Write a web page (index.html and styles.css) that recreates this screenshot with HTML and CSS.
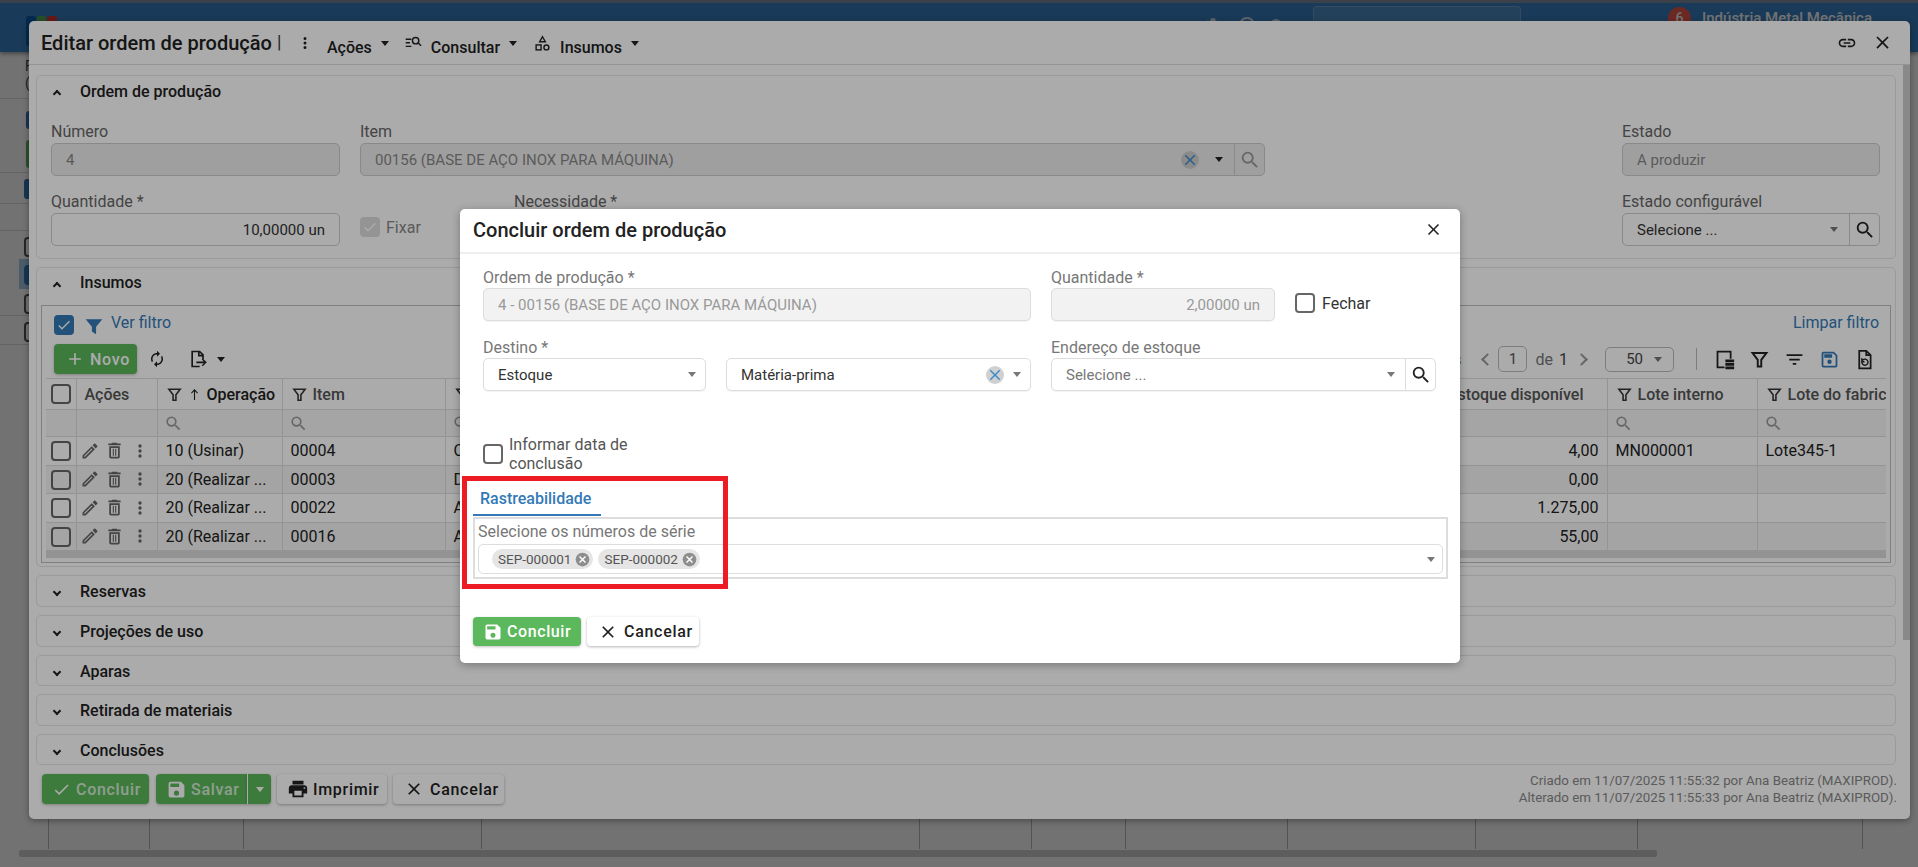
FILE: index.html
```html
<!DOCTYPE html>
<html lang="pt-BR">
<head>
<meta charset="utf-8">
<title>Editar ordem de produção</title>
<link rel="stylesheet" href="styles.css">
</head>
<body>
<svg class="defs" aria-hidden="true">
  <symbol id="i-save" viewBox="0 0 24 24"><path fill="currentColor" d="M17 3H5a2 2 0 0 0-2 2v14a2 2 0 0 0 2 2h14a2 2 0 0 0 2-2V7l-4-4zm-5 16a3 3 0 1 1 0-6 3 3 0 0 1 0 6zm3-10H5V5h10v4z"/></symbol>
  <symbol id="i-close" viewBox="0 0 24 24"><path fill="currentColor" d="M19 6.41 17.59 5 12 10.59 6.41 5 5 6.41 10.59 12 5 17.59 6.41 19 12 13.41 17.59 19 19 17.59 13.41 12z"/></symbol>
  <symbol id="i-search" viewBox="0 0 24 24"><path fill="currentColor" d="M15.5 14h-.79l-.28-.27A6.47 6.47 0 0 0 16 9.5 6.5 6.5 0 1 0 9.5 16c1.61 0 3.09-.59 4.23-1.57l.27.28v.79l5 4.99L20.49 19l-4.99-5zm-6 0C7.01 14 5 11.99 5 9.5S7.01 5 9.5 5 14 7.01 14 9.5 11.99 14 9.5 14z"/></symbol>
  <symbol id="i-more" viewBox="0 0 24 24"><path fill="currentColor" d="M12 8a2 2 0 1 0 0-4 2 2 0 0 0 0 4zm0 2a2 2 0 1 0 0 4 2 2 0 0 0 0-4zm0 6a2 2 0 1 0 0 4 2 2 0 0 0 0-4z"/></symbol>
  <symbol id="i-link" viewBox="0 0 24 24"><path fill="currentColor" d="M3.9 12c0-1.71 1.39-3.1 3.1-3.1h4V7H7c-2.76 0-5 2.24-5 5s2.24 5 5 5h4v-1.9H7c-1.71 0-3.1-1.39-3.1-3.1zM8 13h8v-2H8v2zm9-6h-4v1.9h4c1.71 0 3.1 1.39 3.1 3.1s-1.39 3.1-3.1 3.1h-4V17h4c2.76 0 5-2.24 5-5s-2.24-5-5-5z"/></symbol>
  <symbol id="i-check" viewBox="0 0 24 24"><path fill="currentColor" d="M9 16.17 4.83 12l-1.42 1.41L9 19 21 7l-1.41-1.41z"/></symbol>
  <symbol id="i-add" viewBox="0 0 24 24"><path fill="currentColor" d="M19 13h-6v6h-2v-6H5v-2h6V5h2v6h6v2z"/></symbol>
  <symbol id="i-print" viewBox="0 0 24 24"><path fill="currentColor" d="M19 8H5c-1.66 0-3 1.34-3 3v6h4v4h12v-4h4v-6c0-1.66-1.34-3-3-3zm-3 11H8v-5h8v5zm3-7c-.55 0-1-.45-1-1s.45-1 1-1 1 .45 1 1-.45 1-1 1zm-1-9H6v4h12V3z"/></symbol>
  <symbol id="i-renew" viewBox="0 0 24 24"><path fill="currentColor" d="M12 6v3l4-4-4-4v3c-4.42 0-8 3.58-8 8 0 1.57.46 3.03 1.24 4.26L6.7 14.8A5.87 5.87 0 0 1 6 12c0-3.31 2.69-6 6-6zm6.76 1.74L17.3 9.2c.44.84.7 1.79.7 2.8 0 3.31-2.69 6-6 6v-3l-4 4 4 4v-3c4.42 0 8-3.58 8-8 0-1.57-.46-3.03-1.24-4.26z"/></symbol>
  <symbol id="i-edit" viewBox="0 0 24 24"><path fill="currentColor" d="M14.06 9.02l.92.92L5.92 19H5v-.92l9.06-9.06M17.66 3c-.25 0-.51.1-.7.29l-1.83 1.83 3.75 3.75 1.83-1.83a.996.996 0 0 0 0-1.41l-2.34-2.34c-.2-.2-.45-.29-.71-.29zm-3.6 3.19L3 17.25V21h3.75L17.81 9.94l-3.75-3.75z"/></symbol>
  <symbol id="i-trash" viewBox="0 0 24 24"><path fill="currentColor" d="M16 9v10H8V9h8m-1.5-6h-5l-1 1H5v2h14V4h-3.5l-1-1zM18 7H6v12c0 1.1.9 2 2 2h8c1.1 0 2-.9 2-2V7zM10 10h1.3v8H10zM12.7 10H14v8h-1.3z"/></symbol>
  <symbol id="i-funnel" viewBox="0 0 24 24"><path fill="none" stroke="currentColor" stroke-width="2.2" d="M4 4.5h16l-6 8v7.5h-4v-7.5z"/></symbol>
  <symbol id="i-funnel-solid" viewBox="0 0 24 24"><path fill="currentColor" d="M2 4h20l-7.5 9v9l-5-3.5V13z"/></symbol>
  <symbol id="i-up" viewBox="0 0 24 24"><path fill="currentColor" d="M13 22h-2V6L7 10 5.600 8.600 12 2l6.400 6.600L17 10l-4-4z"/></symbol>
  <symbol id="i-sort" viewBox="0 0 24 24"><path fill="currentColor" d="M10 18h4v-2h-4v2zM3 6v2h18V6H3zm3 7h12v-2H6v2z"/></symbol>
  <symbol id="i-query" viewBox="0 0 24 24"><path fill="currentColor" d="M1 5h8v2H1zM1 10h6v2H1zM1 15h8v2H1z"/><circle cx="15" cy="8" r="4.500" fill="none" stroke="currentColor" stroke-width="2"/><path fill="currentColor" d="M18 12l1.400-1.400 4 4-1.400 1.400z"/></symbol>
  <symbol id="i-shapes" viewBox="0 0 24 24"><path fill="none" stroke="currentColor" stroke-width="2" d="M12 2.500 16 9.500H8z"/><rect x="3" y="14" width="7" height="7" fill="none" stroke="currentColor" stroke-width="2"/><circle cx="17.500" cy="17.500" r="3.500" fill="none" stroke="currentColor" stroke-width="2"/></symbol>
  <symbol id="i-export" viewBox="0 0 24 24"><path fill="none" stroke="currentColor" stroke-width="2" d="M14 21H5V3h9l4 4v5M13 3v5h5"/><path fill="currentColor" d="M10 15h9l-2.500-2.500 1.200-1.200 4.800 4.700-4.800 4.700-1.200-1.200 2.500-2.500h-9z"/></symbol>
  <symbol id="i-columns" viewBox="0 0 24 24"><path fill="none" stroke="currentColor" stroke-width="2" d="M12 21H4V3h15v8"/><path fill="currentColor" d="M13 12h10v3H13zM13 16h10v3H13zM13 20h10v3H13z"/></symbol>
  <symbol id="i-restore" viewBox="0 0 24 24"><path fill="none" stroke="currentColor" stroke-width="2" d="M14 2H6v20h13V7zM14 2v5h5"/><path fill="none" stroke="currentColor" stroke-width="1.600" d="M9 15a3.500 3.500 0 1 0 1.200-2.600L9 11.500v3h3"/></symbol>
  <symbol id="i-floppy" viewBox="0 0 24 24"><path fill="currentColor" d="M17 3H5a2 2 0 0 0-2 2v14a2 2 0 0 0 2 2h14a2 2 0 0 0 2-2V7l-4-4zm2 16H5V5h11.170L19 7.830V19zm-7-7a2.500 2.500 0 1 0 0 5 2.500 2.500 0 0 0 0-5zM6 6h9v4H6z"/></symbol>
  <symbol id="i-clear" viewBox="0 0 24 24"><circle cx="12" cy="12" r="11" fill="currentColor"/><path fill="#fff" d="M17.500 8 16 6.500l-4 4-4-4L6.500 8l4 4-4 4L8 17.500l4-4 4 4 1.500-1.500-4-4z"/></symbol>
  <symbol id="i-clear-blue" viewBox="0 0 24 24"><circle cx="12" cy="12" r="12" fill="#d0d0d0"/><path fill="#3f8ccb" d="M19 6.400 17.600 5 12 10.600 6.400 5 5 6.400l5.600 5.600L5 17.600 6.400 19l5.600-5.600 5.600 5.600 1.400-1.400-5.600-5.600z"/></symbol>
  <symbol id="i-gear" viewBox="0 0 24 24"><path fill="currentColor" d="M19.400 13a7.500 7.500 0 0 0 0-2l2.100-1.600-2-3.500-2.500 1a7.500 7.500 0 0 0-1.700-1L15 3H9l-.4 2.900a7.500 7.500 0 0 0-1.700 1l-2.500-1-2 3.500L4.600 11a7.500 7.500 0 0 0 0 2l-2.100 1.600 2 3.500 2.500-1a7.500 7.500 0 0 0 1.700 1L9 21h6l.4-2.900a7.500 7.500 0 0 0 1.700-1l2.500 1 2-3.500z"/></symbol>
</svg>

<div class="page">
  <header class="topbar">
    <div class="logo"><span class="logo-a"></span><span class="logo-b"></span><span class="logo-c"></span></div>
    <svg class="top-gear"><use href="#i-gear"/></svg>
    <span class="top-ring"></span>
    <span class="top-ring top-ring-small"></span>
    <div class="top-search"></div>
    <span class="top-badge">6</span>
    <span class="top-company">Indústria Metal Mecânica</span>
  </header>
  <div class="strip">
    <div class="strip-head"><span>F</span><span>(</span></div>
    <div class="strip-row strip-row-buttons"><span class="strip-blue"></span><span class="strip-green"></span></div>
    <div class="strip-row strip-row-tab"><span class="strip-blue strip-blue-wide"></span></div>
    <div class="strip-row strip-row-empty"></div>
    <div class="strip-row strip-row-a"><span class="strip-box"></span></div>
    <div class="strip-row strip-row-selected"><span class="strip-box strip-box-on"></span></div>
    <div class="strip-row strip-row-c"><span class="strip-box"></span></div>
    <div class="strip-row strip-row-d"><span class="strip-box"></span></div>
  </div>
  <div class="bg-grid"><i></i><i></i><i></i><i></i><i></i><i></i><i></i><i></i><i></i><i></i><i></i></div>
  <div class="bg-scroll"></div>
</div>

<div class="backdrop"></div>

<section class="window">
  <header class="win-head">
    <h1 class="win-title">Editar ordem de produção</h1>
    <span class="win-sep">|</span>
    <div class="win-menu">
      <svg class="ic-more"><use href="#i-more"/></svg>
      <span class="win-menu-text">Ações</span><span class="caret caret-dark caret-menu"></span>
    </div>
    <div class="win-menu win-menu-b">
      <svg class="ic-menu"><use href="#i-query"/></svg>
      <span class="win-menu-text">Consultar</span><span class="caret caret-dark caret-menu"></span>
    </div>
    <div class="win-menu win-menu-c">
      <svg class="ic-menu"><use href="#i-shapes"/></svg>
      <span class="win-menu-text">Insumos</span><span class="caret caret-dark caret-menu"></span>
    </div>
    <div class="win-tools">
      <svg class="ic-link"><use href="#i-link"/></svg>
      <svg class="ic-x"><use href="#i-close"/></svg>
    </div>
  </header>

  <div class="win-body">
    <div class="win-scroll"></div>

    <section class="panel">
      <h2 class="panel-head"><span class="chev chev-up"></span>Ordem de produção</h2>
      <div class="form">
        <div class="form-row">
          <div class="field w-num"><label class="lbl">Número</label><div class="inp inp-off">4</div></div>
          <div class="field w-item">
            <label class="lbl">Item</label>
            <div class="inp inp-off inp-group">
              <span class="grow">00156 (BASE DE AÇO INOX PARA MÁQUINA)</span>
              <svg class="ic-clear-outer"><use href="#i-clear-blue"/></svg>
              <span class="caret caret-dark caret-item"></span>
              <span class="addon"><svg class="ic-search ic-search-off"><use href="#i-search"/></svg></span>
            </div>
          </div>
          <div class="field w-state"><label class="lbl">Estado</label><div class="inp inp-off">A produzir</div></div>
        </div>
        <div class="form-row">
          <div class="field w-num"><label class="lbl">Quantidade *</label><div class="inp inp-right inp-dark">10,00000 un</div></div>
          <div class="fix"><span class="box box-off"><svg><use href="#i-check"/></svg></span><span class="fix-text">Fixar</span></div>
          <div class="field w-need"><label class="lbl">Necessidade *</label><div class="inp"></div></div>
          <div class="field w-state">
            <label class="lbl">Estado configurável</label>
            <div class="inp inp-group inp-dark">
              <span class="grow">Selecione ...</span>
              <span class="caret caret-item"></span>
              <span class="addon"><svg class="ic-search"><use href="#i-search"/></svg></span>
            </div>
          </div>
        </div>
      </div>
    </section>

    <section class="panel panel-grid">
      <h2 class="panel-head"><span class="chev chev-up"></span>Insumos</h2>
      <div class="grid-box">
        <div class="bar bar-filter">
          <span class="box box-on"><svg><use href="#i-check"/></svg></span>
          <svg class="ic-funnel-solid"><use href="#i-funnel-solid"/></svg>
          <a class="link">Ver filtro</a>
          <a class="link link-right">Limpar filtro</a>
        </div>
        <div class="bar bar-actions">
          <button class="btn btn-green btn-new"><svg><use href="#i-add"/></svg>Novo</button>
          <svg class="ic-renew"><use href="#i-renew"/></svg>
          <svg class="ic-export"><use href="#i-export"/></svg>
          <span class="caret caret-dark caret-export"></span>
          <div class="pager">
            <span class="pager-text">registros</span>
            <span class="pager-arrow pager-prev"></span>
            <span class="pager-box">1</span>
            <span class="pager-text pager-de">de</span>
            <span class="pager-total">1</span>
            <span class="pager-arrow pager-next"></span>
            <span class="pager-size">50<span class="caret"></span></span>
            <span class="pager-div"></span>
            <svg class="ic-tool"><use href="#i-columns"/></svg>
            <svg class="ic-tool"><use href="#i-funnel"/></svg>
            <svg class="ic-tool"><use href="#i-sort"/></svg>
            <svg class="ic-tool ic-tool-blue"><use href="#i-floppy"/></svg>
            <svg class="ic-tool"><use href="#i-restore"/></svg>
          </div>
        </div>
        <table class="tbl">
          <colgroup><col class="c1"><col class="c2"><col class="c3"><col class="c4"><col class="c5"><col class="c6"><col class="c7"><col class="c8"></colgroup>
          <thead>
            <tr class="tr-head">
              <th class="cell-box"><span class="box"></span></th>
              <th class="th-plain">Ações</th>
              <th><span class="th-in"><svg class="ic-f"><use href="#i-funnel"/></svg><svg class="ic-up"><use href="#i-up"/></svg><b>Operação</b></span></th>
              <th><span class="th-in"><svg class="ic-f"><use href="#i-funnel"/></svg>Item</span></th>
              <th><span class="th-in"><svg class="ic-f"><use href="#i-funnel"/></svg>Componente</span></th>
              <th class="th-right">Estoque disponível</th>
              <th><span class="th-in"><svg class="ic-f"><use href="#i-funnel"/></svg>Lote interno</span></th>
              <th><span class="th-in th-clip"><svg class="ic-f"><use href="#i-funnel"/></svg>Lote do fabricante</span></th>
            </tr>
            <tr class="tr-filter">
              <td></td><td></td>
              <td><svg class="ic-s"><use href="#i-search"/></svg></td>
              <td><svg class="ic-s"><use href="#i-search"/></svg></td>
              <td><svg class="ic-s"><use href="#i-search"/></svg></td>
              <td></td>
              <td><svg class="ic-s"><use href="#i-search"/></svg></td>
              <td><svg class="ic-s"><use href="#i-search"/></svg></td>
            </tr>
          </thead>
          <tbody>
            <tr>
              <td class="cell-box"><span class="box"></span></td>
              <td class="cell-act"><svg class="ic-pen"><use href="#i-edit"/></svg><svg class="ic-del"><use href="#i-trash"/></svg><svg class="ic-dots"><use href="#i-more"/></svg></td>
              <td>10 (Usinar)</td><td>00004</td><td>C</td><td class="num">4,00</td><td>MN000001</td><td>Lote345-1</td>
            </tr>
            <tr>
              <td class="cell-box"><span class="box"></span></td>
              <td class="cell-act"><svg class="ic-pen"><use href="#i-edit"/></svg><svg class="ic-del"><use href="#i-trash"/></svg><svg class="ic-dots"><use href="#i-more"/></svg></td>
              <td>20 (Realizar ...</td><td>00003</td><td>D</td><td class="num">0,00</td><td></td><td></td>
            </tr>
            <tr>
              <td class="cell-box"><span class="box"></span></td>
              <td class="cell-act"><svg class="ic-pen"><use href="#i-edit"/></svg><svg class="ic-del"><use href="#i-trash"/></svg><svg class="ic-dots"><use href="#i-more"/></svg></td>
              <td>20 (Realizar ...</td><td>00022</td><td>A</td><td class="num">1.275,00</td><td></td><td></td>
            </tr>
            <tr>
              <td class="cell-box"><span class="box"></span></td>
              <td class="cell-act"><svg class="ic-pen"><use href="#i-edit"/></svg><svg class="ic-del"><use href="#i-trash"/></svg><svg class="ic-dots"><use href="#i-more"/></svg></td>
              <td>20 (Realizar ...</td><td>00016</td><td>A</td><td class="num">55,00</td><td></td><td></td>
            </tr>
          </tbody>
        </table>
        <div class="tbl-scroll"></div>
      </div>
    </section>

    <section class="panel panel-closed"><h2 class="panel-head"><span class="chev"></span>Reservas</h2></section>
    <section class="panel panel-closed"><h2 class="panel-head"><span class="chev"></span>Projeções de uso</h2></section>
    <section class="panel panel-closed"><h2 class="panel-head"><span class="chev"></span>Aparas</h2></section>
    <section class="panel panel-closed"><h2 class="panel-head"><span class="chev"></span>Retirada de materiais</h2></section>
    <section class="panel panel-closed"><h2 class="panel-head"><span class="chev"></span>Conclusões</h2></section>

    <footer class="win-foot">
      <button class="btn btn-green btn-f1"><svg><use href="#i-check"/></svg><span class="faded">Concluir</span></button>
      <div class="split">
        <button class="btn btn-green btn-f2"><svg><use href="#i-save"/></svg><span class="faded">Salvar</span></button>
        <button class="btn btn-green btn-f3"><span class="caret caret-white"></span></button>
      </div>
      <button class="btn btn-white btn-f4"><svg><use href="#i-print"/></svg>Imprimir</button>
      <button class="btn btn-white btn-f5"><svg><use href="#i-close"/></svg>Cancelar</button>
      <div class="audit">
        <div>Criado em 11/07/2025 11:55:32 por Ana Beatriz (MAXIPROD).</div>
        <div>Alterado em 11/07/2025 11:55:33 por Ana Beatriz (MAXIPROD).</div>
      </div>
    </footer>
  </div>
</section>

<div class="backdrop backdrop-top"></div>

<section class="dialog">
  <header class="dlg-head">
    <h2 class="dlg-title">Concluir ordem de produção</h2>
    <svg class="dlg-x"><use href="#i-close"/></svg>
  </header>
  <div class="dlg-form">
    <div class="dlg-row">
      <div class="field d-wide"><label class="lbl lbl-d">Ordem de produção *</label><div class="inp inp-off inp-d">4 - 00156 (BASE DE AÇO INOX PARA MÁQUINA)</div></div>
      <div class="field d-qty"><label class="lbl lbl-d">Quantidade *</label><div class="inp inp-off inp-d inp-right">2,00000 un</div></div>
      <div class="close-check"><span class="box box-d"></span><span class="close-text">Fechar</span></div>
    </div>
    <div class="dlg-row dlg-row-2">
      <div class="field d-dest">
        <label class="lbl lbl-d">Destino *</label>
        <div class="inp inp-d inp-group"><span class="grow txt-dark">Estoque</span><span class="caret caret-sel"></span></div>
      </div>
      <div class="field d-type">
        <label class="lbl lbl-d lbl-hidden">Tipo</label>
        <div class="inp inp-d inp-group"><span class="grow txt-dark">Matéria-prima</span><svg class="ic-clear-inner"><use href="#i-clear-blue"/></svg><span class="caret caret-sel"></span></div>
      </div>
      <div class="field d-addr">
        <label class="lbl lbl-d">Endereço de estoque</label>
        <div class="inp inp-d inp-group"><span class="grow">Selecione ...</span><span class="caret caret-sel caret-addr"></span><span class="addon addon-d"><svg class="ic-search"><use href="#i-search"/></svg></span></div>
      </div>
    </div>
    <div class="inform"><span class="box box-d"></span><span class="inform-text">Informar data de conclusão</span></div>
  </div>
  <div class="tabs"><span class="tab">Rastreabilidade</span></div>
  <div class="tab-body">
    <label class="lbl lbl-d lbl-serial">Selecione os números de série</label>
    <div class="chips">
      <span class="chip">SEP-000001<svg class="chip-x"><use href="#i-clear"/></svg></span>
      <span class="chip">SEP-000002<svg class="chip-x"><use href="#i-clear"/></svg></span>
      <span class="caret caret-sel caret-chips"></span>
    </div>
  </div>
  <footer class="dlg-foot">
    <button class="btn btn-green btn-d1"><svg><use href="#i-save"/></svg>Concluir</button>
    <button class="btn btn-white btn-d2"><svg><use href="#i-close"/></svg>Cancelar</button>
  </footer>
  <div class="highlight"></div>
</section>
</body>
</html>
```

FILE: styles.css
```css
* { box-sizing: border-box; }
html, body { margin: 0; width: 1918px; height: 867px; overflow: hidden; }
body { position: relative; background: #fff; font-family: Roboto, "Liberation Sans", sans-serif; color: #222; font-size: 15px; }
h1, h2 { margin: 0; font-weight: 500; }
svg { display: block; flex: none; }
.defs { position: absolute; width: 0; height: 0; }

/* page behind the windows */
.page { height: 867px; display: flex; flex-direction: column; }
.topbar { height: 52px; flex: none; display: flex; align-items: flex-start; background: #3a82c4; border-top: 3px solid #8592a6; box-shadow: 0 2px 4px rgba(0,0,0,.4); color: #fff; }
.logo { display: flex; gap: 1px; margin: 13px 0 0 26px; width: 31px; }
.logo span { width: 10px; height: 30px; border-radius: 2px; }
.logo-a { background: #0a5fb0; }
.logo-b { background: #55b055; }
.logo-c { background: #e53935; }
.top-gear { width: 18px; height: 18px; margin: 13px 0 0 1147px; color: #cfe0ef; }
.top-ring { width: 16px; height: 16px; border: 2px solid #cfe0ef; border-radius: 50%; margin: 14px 0 0 17px; }
.top-ring-small { width: 12px; height: 12px; margin: 16px 0 0 15px; }
.top-search { width: 208px; height: 40px; margin: 3px 0 0 31px; background: rgba(255,255,255,.12); border: 1px solid rgba(255,255,255,.2); border-radius: 4px; }
.top-badge { width: 23px; height: 23px; margin: 4px 0 0 147px; border-radius: 50%; background: #f25c50; text-align: center; font-size: 14px; font-weight: 500; line-height: 23px; }
.top-company { margin: 6px 0 0 11px; font-size: 15px; font-weight: 500; color: #fff; }

.strip { height: 293px; flex: none; margin-top: 0; display: flex; flex-direction: column; width: 60px; color: #444; }
.strip-head { height: 47px; flex: none; padding: 6px 0 0 25px; display: flex; flex-direction: column; gap: 0; border-bottom: 1px solid #ddd; line-height: 17px; font-size: 14px; }
.strip-row { flex: none; padding-left: 26px; border-bottom: 1px solid #ddd; }
.strip-row-buttons { height: 74px; padding-top: 12px; }
.strip-row-tab { height: 31px; padding: 6px 0 0 24px; }
.strip-row-empty { height: 27px; }
.strip-row-a { height: 28px; padding: 6px 0 0 24px; border: 0; }
.strip-row-selected { height: 30px; padding: 6px 0 0 24px; margin-left: 19px; padding-left: 5px; background: #a9cdea; border: 0; }
.strip-row-c { height: 27px; padding: 5px 0 0 24px; }
.strip-row-d { height: 29px; padding: 6px 0 0 24px; }
.strip-blue { display: block; width: 20px; height: 18px; margin-bottom: 11px; border-radius: 3px; background: #337ab7; }
.strip-blue-wide { height: 20px; }
.strip-green { display: block; width: 20px; height: 28px; border-radius: 3px; background: #5cb85c; }
.strip-box { display: block; width: 20px; height: 20px; border: 2px solid #555; border-radius: 4px; }
.strip-box-on { background: #337ab7; border-color: #337ab7; }
.bg-grid { margin-top: auto; height: 34px; flex: none; display: grid; grid-template-columns: 49px 101px 94px 238px 438px 112px 94px 162px 188px 162px 225px; }
.bg-grid i { border-right: 1px solid #bbb; }
.bg-scroll { height: 7px; flex: none; margin: 1px 0 10px 19px; width: 1638px; border-radius: 2px; background: #cfd0d2; }

.backdrop { position: absolute; inset: 0; background: rgba(0,0,0,.33); }

/* outer window */
.window { position: absolute; left: 29px; top: 21px; width: 1881px; height: 798px; background: #fff; border-radius: 5px; box-shadow: 0 2px 6px rgba(0,0,0,.35); display: flex; flex-direction: column; }
.win-head { height: 44px; flex: none; display: flex; align-items: center; border-bottom: 1px solid #ddd; padding-left: 12px; }
.win-title { font-size: 20px; font-weight: 500; color: #222; line-height: 40px; width: 236px; white-space: nowrap; }
.win-sep { width: 10px; font-size: 18px; color: #333; margin-top: -2px; }
.win-menu { display: flex; align-items: center; margin-left: 17px; margin-top: 2px; }
.win-menu-b { margin-left: 16px; }
.win-menu-c { margin-left: 17px; }
.win-menu-text { font-size: 16px; font-weight: 500; color: #222; margin-top: 7px; }
.ic-more { width: 18px; height: 18px; color: #222; margin-right: 13px; margin-left: -8px; margin-top: -2px; }
.ic-menu { width: 17px; height: 17px; color: #222; margin-right: 9px; margin-top: -1px; }
.caret { display: inline-block; width: 0; height: 0; border-left: 4px solid transparent; border-right: 4px solid transparent; border-top: 5px solid #777; flex: none; }
.caret-dark { border-top-color: #222; }
.caret-menu { margin-left: 9px; margin-top: 0; }
.win-tools { margin-left: auto; display: flex; align-items: center; gap: 15px; padding-right: 17px; }
.ic-link { width: 20px; height: 20px; color: #222; }
.ic-x { width: 21px; height: 21px; color: #222; }

.win-body { flex: 1; position: relative; padding: 10px 14px 0 7px; display: flex; flex-direction: column; min-height: 0; }
.win-scroll { position: absolute; right: 0; top: 0; width: 7px; height: 575px; background: #cdcdcd; }
.panel { border: 1px solid #e6e6e6; border-radius: 5px; flex: none; margin-bottom: 8px; }
.panel-closed { height: 31.6px; }
.panel-grid { height: 300.4px; }
.panel-grid .panel-head { padding-bottom: 2px; }
.panel-head { height: 31px; display: flex; align-items: center; font-size: 16px; font-weight: 500; color: #222; padding-left: 43px; position: relative; }
.chev { position: absolute; left: 17px; top: 13px; width: 6px; height: 6px; border-right: 2px solid #222; border-bottom: 2px solid #222; transform: rotate(45deg); }
.chev-up { top: 15px; transform: rotate(225deg); }

.form { padding: 15px 15px 0 14px; display: flex; flex-direction: column; gap: 16px; height: 151px; }
.form-row { display: flex; }
.field { display: flex; flex-direction: column; flex: none; }
.lbl { height: 21px; font-size: 16px; line-height: 20px; color: #666; white-space: nowrap; }
.inp { height: 33px; border: 1px solid #ccc; border-radius: 5px; display: flex; align-items: center; padding: 0 14px; font-size: 15px; color: #444; background: #fff; white-space: nowrap; }
.inp-off { background: #eee; color: #888; }
.inp-right { justify-content: flex-end; }
.inp-dark { color: #333; }
.inp-group { padding-right: 0; }
.grow { flex: 1; min-width: 0; }
.w-num { width: 289px; margin-right: 20px; }
.w-item { width: 905px; }
.w-state { width: 258px; margin-left: auto; }
.w-need { width: 300px; margin-left: 14px; }
.addon { width: 30px; height: 100%; border-left: 1px solid #ccc; display: flex; align-items: center; justify-content: center; flex: none; }
.ic-search { width: 22px; height: 22px; color: #222; }
.ic-search-off { color: #999; }
.ic-clear-outer { width: 18px; height: 18px; margin-right: 16px; }
.caret-item { margin-right: 11px; }
.fix { width: 140px; display: flex; align-items: center; height: 20px; margin-top: 25px; }
.fix-text { margin-left: 6px; font-size: 16px; color: #888; }
.box { display: inline-block; width: 20px; height: 20px; border: 2px solid #666; border-radius: 4px; flex: none; background: transparent; vertical-align: middle; }
.box svg { width: 16px; height: 16px; color: #fff; }
.box-off { background: #ddd; border-color: #ddd; }
.box-on { background: #337ab7; border-color: #337ab7; }

/* grid panel */
.grid-box { margin: 6px 4px 0; height: 258px; border: 1px solid #bfbfbf; padding: 0 4px; }
.bar { display: flex; align-items: center; padding: 0 0 0 8px; }
.bar-filter { height: 38px; }
.ic-funnel-solid { width: 20px; height: 20px; color: #337ab7; margin: 2px 7px 0 10px; }
.link { color: #337ab7; font-size: 16px; margin-top: -6px; }
.link-right { margin-left: auto; margin-right: 7px; }
.bar-actions { height: 34px; padding-right: 11px; padding-bottom: 4px; }
.btn { font: 500 16px Roboto, sans-serif; border: 0; border-radius: 4px; display: inline-flex; align-items: center; letter-spacing: .7px; padding: 0; flex: none; }
.btn-green { background: #5cb85c; color: #fff; box-shadow: 0 1px 3px rgba(0,0,0,.25); }
.btn-white { background: #fff; color: #222; box-shadow: 0 1px 3px rgba(0,0,0,.3); }
.btn-new { width: 83px; height: 30px; padding-left: 11px; }
.btn-new svg { width: 20px; height: 20px; margin-right: 5px; }
.ic-renew { width: 18px; height: 18px; color: #222; margin-left: 11px; }
.ic-export { width: 20px; height: 20px; color: #222; margin-left: 22px; }
.caret-export { margin-left: 9px; }
.pager { margin-left: auto; display: flex; align-items: center; font-size: 15px; color: #777; }
.pager-text { font-size: 16px; }
.pager-prev, .pager-next { width: 9px; height: 9px; border-left: 2px solid #999; border-bottom: 2px solid #999; transform: rotate(45deg); }
.pager-prev { margin: 0 6px 0 22px; }
.pager-next { margin: 0 19px 0 9px; transform: rotate(225deg); }
.pager-box { width: 29px; height: 26px; border: 1px solid #bbb; border-radius: 5px; text-align: center; line-height: 24px; color: #555; font-size: 15px; }
.pager-de { margin-left: 8px; }
.pager-total { margin-left: 6px; color: #444; font-size: 16px; }
.pager-size { width: 69px; height: 25px; border: 1px solid #bbb; border-radius: 5px; display: flex; align-items: center; justify-content: flex-end; padding-right: 11px; gap: 11px; color: #444; }
.pager-div { width: 1px; height: 22px; background: #bbb; margin: 0 17px 0 22px; }
.ic-tool { width: 21px; height: 21px; color: #222; margin-right: 14px; }
.ic-tool:last-child { margin-right: 0; }
.ic-tool-blue { color: #337ab7; }

.tbl { width: 1840px; table-layout: fixed; border-collapse: collapse; font-size: 16px; color: #222; }
.c1 { width: 30px; } .c2 { width: 81px; } .c3 { width: 125px; } .c4 { width: 163px; }
.c5 { width: 992px; } .c6 { width: 170px; } .c7 { width: 150px; } .c8 { width: 129px; }
.tbl th, .tbl td { padding: 0 0 0 8px; border: 1px solid #ddd; border-left-width: 0; white-space: nowrap; overflow: hidden; text-align: left; }
.tbl tr > :last-child { border-right: 0; }
.tbl th { font-weight: 500; color: #555; padding-left: 11px; }
.tr-head { height: 31px; }
.tr-filter { height: 27px; background: #f7f7f7; }
.tbl tbody tr { height: 28.5px; }
.tbl tbody tr:nth-child(even) { background: #f5f5f5; }
.th-plain { padding-left: 8px !important; }
.th-in { display: flex; align-items: center; }
.th-in b { font-weight: 500; color: #222; }
.tbl th.th-right { text-align: right; padding-right: 32px; }
.tbl .cell-box { padding: 0 0 0 5px; }
.ic-f { width: 17px; height: 17px; color: #333; margin-right: 5px; margin-left: -3px; }
.ic-up { width: 13px; height: 15px; color: #222; margin: 0 6px 0 0; }
.ic-s { width: 19px; height: 19px; color: #999; margin-left: -2px; }
.cell-act { padding: 0 !important; }
.cell-act svg { display: inline-block; vertical-align: middle; }
.ic-pen { width: 20px; height: 20px; color: #666; margin-left: 3px; }
.ic-del { width: 21px; height: 21px; color: #666; margin-left: 4px; }
.ic-dots { width: 20px; height: 20px; color: #666; margin-left: 5px; }
.tbl td.num { text-align: right; padding-right: 8px; }
.tbl-scroll { height: 7px; background: #dcdcdc; width: 1840px; }

/* footer of the outer window */
.win-foot { display: flex; align-items: flex-start; padding: 1px 0 0 6px; height: 36px; margin-top: 0; }
.btn-f1, .btn-f2, .btn-f3, .btn-f4, .btn-f5 { height: 30px; }
.btn svg { color: inherit; }
.btn-f1 { width: 107px; padding-left: 10px; }
.btn-f1 svg { width: 19px; height: 19px; margin-right: 5px; }
.faded { color: rgba(255,255,255,.75); }
.split { display: flex; margin-left: 7px; }
.btn-f2 { width: 91px; padding-left: 10px; border-radius: 4px 0 0 4px; }
.btn-f2 svg { width: 21px; height: 21px; margin-right: 4px; }
.btn-f3 { width: 24px; justify-content: center; border-left: 1px solid #fff; border-radius: 0 4px 4px 0; }
.caret-white { border-top-color: #fff; }
.btn-f4 { width: 110px; margin-left: 6px; padding-left: 10px; }
.btn-f4 svg { width: 22px; height: 22px; margin-right: 4px; }
.btn-f5 { width: 111px; margin-left: 6px; padding-left: 11px; }
.btn-f5 svg { width: 20px; height: 20px; margin-right: 6px; }
.audit { margin-left: auto; margin-right: -1px; margin-top: -2px; text-align: right; font-size: 13.33px; line-height: 17px; color: #888; letter-spacing: 0; }

/* dialog */
.dialog { position: absolute; left: 460px; top: 209px; width: 1000px; height: 454px; background: #fff; border-radius: 5px; box-shadow: 0 2px 8px rgba(0,0,0,.3); display: flex; flex-direction: column; }
.dlg-head { height: 45px; flex: none; display: flex; align-items: center; justify-content: space-between; padding: 0 17px 2px 13px; border-bottom: 2px solid #eee; }
.dlg-title { font-size: 20px; font-weight: 500; color: #222; }
.dlg-x { width: 19px; height: 19px; color: #222; }
.dlg-form { height: 248px; flex: none; padding: 13px 0 0 23px; }
.dlg-row { display: flex; }
.dlg-row-2 { margin-top: 16px; }
.lbl-d { color: #777; line-height: 22px; }
.inp-d { border-color: #ddd; box-shadow: 0 1px 1px rgba(0,0,0,.05); color: #777; }
.inp-d.inp-off { background: #f2f2f2; color: #999; }
.txt-dark { color: #333; }
.d-wide { width: 548px; margin-right: 20px; }
.d-qty { width: 224px; }
.close-check { display: flex; align-items: center; height: 20px; margin: 26px 0 0 20px; }
.close-text { margin-left: 7px; font-size: 16px; color: #333; }
.d-dest { width: 223px; margin-right: 20px; }
.d-type { width: 305px; margin-right: 20px; }
.d-addr { width: 385px; }
.lbl-hidden { visibility: hidden; }
.caret-sel { margin-right: 9px; }
.ic-clear-inner { width: 18px; height: 18px; margin-right: 9px; }
.caret-addr { margin-right: 10px; }
.addon-d { border-left-color: #ddd; }
.inform { display: flex; align-items: center; margin-top: 44px; width: 180px; }
.box-d { border-color: #666; }
.inform-text { margin-left: 6px; font-size: 16px; line-height: 19px; color: #555; }
.tabs { height: 11px; position: relative; flex: none; margin: -3px 0 0 13px; }
.tab { display: block; width: 128px; height: 24px; position: relative; top: -7px; padding-left: 7px; border-bottom: 2px solid #337ab7; font-size: 16px; font-weight: 500; color: #337ab7; line-height: 14px; }
.tab-body { flex: none; height: 62px; margin: 7px 12px 0 13px; border: 2px solid #ddd; padding: 4px 3px 0 3px; }
.lbl-serial { display: block; height: 21px; line-height: 17px; }
.chips { height: 30px; border: 1px solid #ddd; border-radius: 5px; display: flex; align-items: center; padding-left: 13px; gap: 5px; margin-top: 0; }
.chip { display: inline-flex; align-items: center; height: 20px; background: #e5e5e5; border-radius: 10px; padding: 0 3px 0 6px; font-size: 13.5px; color: #555; }
.chip-x { width: 15px; height: 15px; margin-left: 4px; color: #8e8e8e; }
.caret-chips { margin-left: auto; margin-right: 7px; }
.dlg-foot { display: flex; gap: 6px; margin: 38px 0 0 13px; }
.btn-d1 { width: 108px; height: 29px; padding-left: 10px; letter-spacing: .6px; }
.btn-d1 svg { width: 20px; height: 20px; margin-right: 4px; }
.btn-d2 { width: 112px; height: 29px; padding-left: 11px; }
.btn-d2 svg { width: 20px; height: 20px; margin-right: 6px; }
.highlight { position: absolute; left: 2px; top: 267px; width: 266px; height: 113px; border: 5px solid #ed1c24; }
```
